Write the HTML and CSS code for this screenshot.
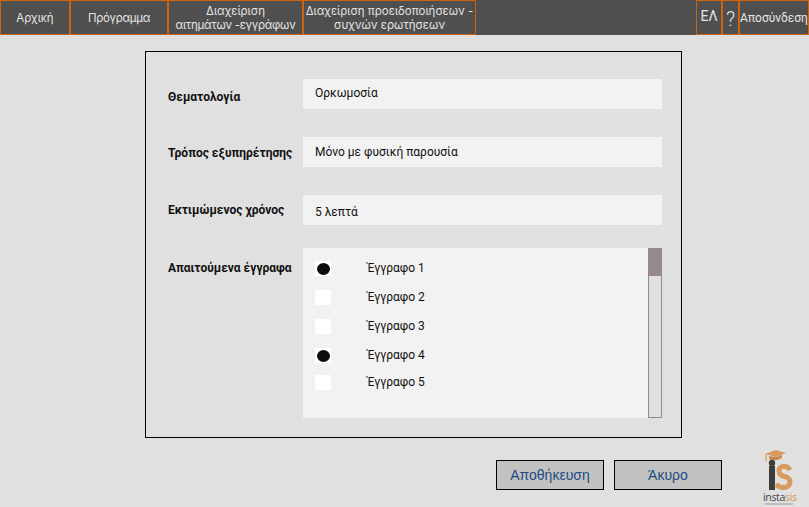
FILE: index.html
```html
<!DOCTYPE html>
<html lang="el">
<head>
    <meta charset="UTF-8">
    <meta name="viewport" content="width=device-width, initial-scale=1.0">
    <title>Instasis</title>
    <link rel="stylesheet" href="styles.css">
</head>
<body>
    <nav class="topbar">
        <a class="nav-item nav-home">Αρχική</a>
        <a class="nav-item nav-program"><span class="tight">Πρόγραμμα</span></a>
        <a class="nav-item nav-requests"><span>Διαχείριση<br><span class="tight">αιτημάτων -εγγράφων</span></span></a>
        <a class="nav-item nav-alerts"><span>Διαχείριση προειδοποιήσεων -<br>συχνών ερωτήσεων</span></a>
        <span class="nav-space"></span>
        <a class="nav-item nav-lang">ΕΛ</a>
        <a class="nav-item nav-help">?</a>
        <a class="nav-item nav-logout">Αποσύνδεση</a>
    </nav>

    <main class="card">
        <div class="row">
            <div class="label label-topic">Θεματολογία</div>
            <div class="field">Ορκωμοσία</div>
        </div>
        <div class="row">
            <div class="label label-service">Τρόπος εξυπηρέτησης</div>
            <div class="field field-service">Μόνο με φυσική παρουσία</div>
        </div>
        <div class="row">
            <div class="label">Εκτιμώμενος χρόνος</div>
            <div class="field field-time">5 λεπτά</div>
        </div>
        <div class="row row-docs">
            <div class="label">Απαιτούμενα έγγραφα</div>
            <div class="docs">
                <ul class="doc-list">
                    <li class="doc"><span class="check checked"></span>Έγγραφο 1</li>
                    <li class="doc"><span class="check"></span>Έγγραφο 2</li>
                    <li class="doc"><span class="check"></span>Έγγραφο 3</li>
                    <li class="doc"><span class="check checked"></span>Έγγραφο 4</li>
                    <li class="doc doc-last"><span class="check"></span>Έγγραφο 5</li>
                </ul>
                <div class="scrollbar"><div class="thumb"></div></div>
            </div>
        </div>
    </main>

    <footer class="actions">
        <button class="btn">Αποθήκευση</button>
        <button class="btn">Άκυρο</button>
        <svg class="logo" width="50" height="58" viewBox="0 0 50 58">
            <path d="M6 5 L17 1 L27 4 L17 8 Z" fill="#d99a5f"/>
            <path d="M10 7 L10 10 Q16 13 23 9 L23 6 L17 8 Z" fill="#c98a52"/>
            <path d="M7 5 L7 12" stroke="#d99a5f" stroke-width="1.2"/>
            <circle cx="13" cy="14" r="3.2" fill="#3d3d3d"/>
            <rect x="10" y="17" width="6" height="24" fill="#3d3d3d"/>
            <path d="M31 21 C28 16 20 16 20 22 C20 30 31 25 31 33 C31 40 21 40 17 35" fill="none" stroke="#d99a5f" stroke-width="5"/>
            <text class="logo-word" x="4" y="52" textLength="34"><tspan fill="#444">insta</tspan><tspan fill="#d9904f">sis</tspan></text>
            <rect x="6" y="54.5" width="28" height="1" fill="#999"/>
        </svg>
    </footer>
</body>
</html>
```

FILE: styles.css
```css
* {
    box-sizing: border-box;
}
body {
    margin: 0;
    height: 507px;
    overflow: hidden;
    background-color: #e0e0e0;
    font-family: Roboto, "Liberation Sans", sans-serif;
    font-size: 12px;
    color: #111;
}

/* top menu */
.topbar {
    display: flex;
    height: 35px;
    background-color: #4f4f4f;
}
.nav-item {
    display: flex;
    align-items: center;
    justify-content: center;
    height: 35px;
    border: 1px solid #cc630e;
    text-align: center;
    line-height: 14px;
    color: #e4e4e4;
    font-family: Inter, Roboto, sans-serif;
    font-size: 11.5px;
}
.tight {
    letter-spacing: -0.3px;
}
.nav-home { width: 70px; }
.nav-program { width: 98px; }
.nav-requests { width: 135px; }
.nav-alerts { width: 173px; }
.nav-space { flex: 1; }
.nav-lang {
    width: 26px;
    padding-bottom: 3px;
    font-family: Roboto, sans-serif;
    font-size: 14px;
}
.nav-help {
    width: 17px;
    padding-top: 2px;
    font-family: Roboto, sans-serif;
    font-size: 20px;
    font-weight: 300;
}
.nav-logout {
    width: 70px;
    font-family: Roboto, sans-serif;
    font-size: 12px;
}

/* form */
.card {
    width: 537px;
    height: 387px;
    margin: 16px 0 0 145px;
    padding: 27px 19px 0 22px;
    border: 1px solid #000;
}
.row {
    display: flex;
    align-items: center;
    height: 30px;
    margin-bottom: 28px;
}
.row-docs {
    align-items: flex-start;
    height: 170px;
    margin: -5px 0 0;
}
.label {
    width: 135px;
    font-weight: 700;
}
.label-topic {
    padding-top: 6px;
}
.label-service {
    padding-top: 2px;
}
.row-docs .label {
    padding-top: 13px;
}
.field {
    flex: 1;
    height: 30px;
    padding-left: 12px;
    line-height: 28px;
    background-color: #f2f2f2;
}
.field-service {
    line-height: 30px;
}
.field-time {
    line-height: 34px;
}

/* documents list */
.docs {
    display: flex;
    flex: 1;
    height: 170px;
    background-color: #f2f2f2;
}
.doc-list {
    flex: 1;
    margin: 0;
    padding: 13px 0 0 12px;
    list-style: none;
}
.doc {
    display: flex;
    align-items: flex-start;
    height: 15px;
    margin-bottom: 14px;
    line-height: 15px;
}
.doc-last {
    margin-top: -2px;
}
.check {
    position: relative;
    width: 16px;
    height: 15px;
    margin-right: 36px;
    background-color: #fff;
}
.checked::after {
    content: "";
    position: absolute;
    left: 1.5px;
    top: 1.5px;
    width: 13px;
    height: 12px;
    border-radius: 50%;
    background-color: #0d0d0d;
}
.scrollbar {
    width: 14px;
    border: 1px solid #8c8c8c;
    border-top: none;
    background-color: #e0e0e0;
}
.thumb {
    height: 28px;
    margin: 0 -1px;
    background-color: #968a8a;
}

/* bottom buttons */
.actions {
    display: flex;
    align-items: flex-start;
    margin: 22px 0 0 496px;
}
.btn {
    width: 108px;
    height: 30px;
    margin-right: 10px;
    padding: 0;
    border: 1px solid #000;
    background-color: #c2c2c2;
    color: #234a80;
    font-family: "Liberation Sans", Arial, sans-serif;
    font-size: 14px;
}
.logo {
    margin: -11px 0 0 27px;
    flex: none;
}
.logo-word {
    font-family: "Open Sans", sans-serif;
    font-size: 10.5px;
}
```
